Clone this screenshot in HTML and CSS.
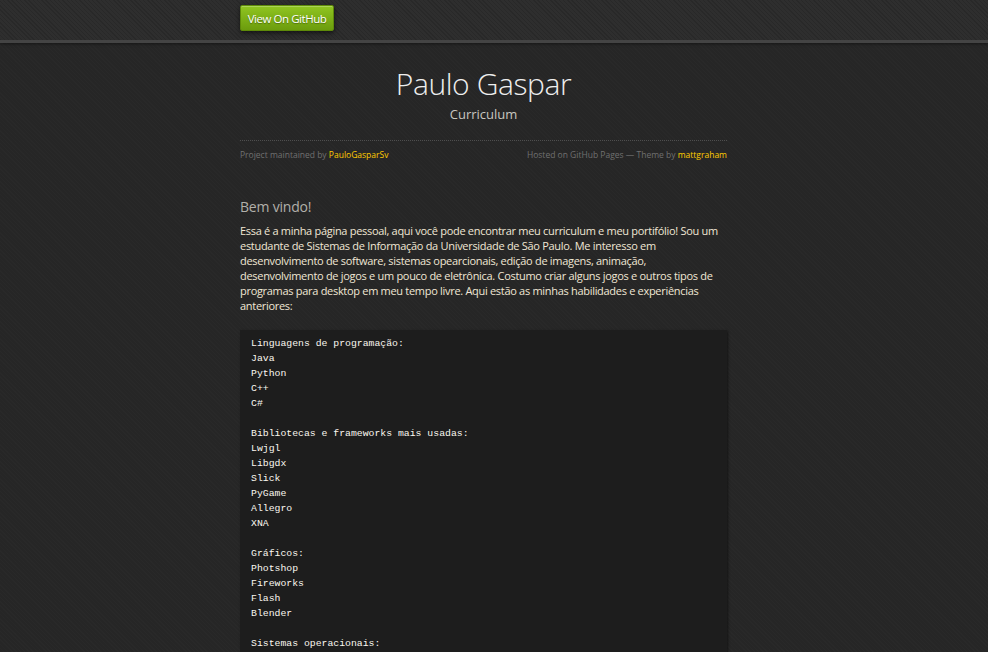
FILE: index.html
```html
<!DOCTYPE html>
<html lang="pt">
<head>
<meta charset="utf-8">
<title>Paulo Gaspar</title>
<link rel="stylesheet" href="styles.css">
</head>
<body>
<header class="topbar">
  <nav class="topnav">
    <a class="gh-button" href="#">View On GitHub</a>
  </nav>
</header>
<main class="container">
  <div class="title-block">
    <h1 class="title">Paulo Gaspar</h1>
    <h2 class="subtitle">Curriculum</h2>
  </div>
  <div class="meta">
    <span>Project maintained by <a href="#">PauloGasparSv</a></span>
    <span>Hosted on GitHub Pages — Theme by <a href="#">mattgraham</a></span>
  </div>
  <section class="content">
    <h3 class="section-title">Bem vindo!</h3>
    <p class="intro">Essa é a minha página pessoal, aqui você pode encontrar meu curriculum e meu portifólio! Sou um estudante de Sistemas de Informação da Universidade de São Paulo. Me interesso em desenvolvimento de software, sistemas opearcionais, edição de imagens, animação, desenvolvimento de jogos e um pouco de eletrônica. Costumo criar alguns jogos e outros tipos de programas para desktop em meu tempo livre. Aqui estão as minhas habilidades e experiências anteriores:</p>
<pre class="code"><code>Linguagens de programação:
Java
Python
C++
C#

Bibliotecas e frameworks mais usadas:
Lwjgl
Libgdx
Slick
PyGame
Allegro
XNA

Gráficos:
Photshop
Fireworks
Flash
Blender

Sistemas operacionais:
Windows
Linux
</code></pre>
  </section>
</main>
</body>
</html>
```
FILE: styles.css
```css
html, body {
  margin: 0;
  padding: 0;
}
body {
  background-color: #262626;
  background-image: repeating-linear-gradient(45deg, rgba(255,255,255,0.012) 0 1px, transparent 1px 3px);
  color: #f0e7d5;
  font-family: "Open Sans", "Liberation Sans", sans-serif;
  font-size: 11px;
  line-height: 15px;
}
a { color: #ffcc00; text-decoration: none; }

.topbar {
  height: 40px;
  background-color: #2e2e2e;
  background-image: repeating-linear-gradient(45deg, rgba(0,0,0,0.12) 0 1px, transparent 1px 3px);
  border-bottom: 3px solid #444;
  box-shadow: 0 1px 3px rgba(0,0,0,0.45);
}
.topnav {
  width: 487px;
  margin-left: calc(50% - 254px);
  padding-top: 5px;
}
.gh-button {
  display: inline-block;
  width: 94px;
  height: 26px;
  box-sizing: border-box;
  line-height: 25px;
  text-align: center;
  font-size: 11.5px;
  letter-spacing: -0.45px;
  color: #fff;
  background: linear-gradient(#90c521, #6b9c0d);
  border: 1px solid #5e8a09;
  border-radius: 2px;
  box-shadow: 0 2px 4px rgba(0,0,0,0.55), inset 0 1px 0 rgba(255,255,255,0.25);
  text-shadow: 0 1px 1px rgba(0,0,0,0.35);
}

.container {
  width: 487px;
  margin-left: calc(50% - 254px);
}
.title-block {
  text-align: center;
  padding-top: 20px;
  padding-bottom: 17px;
  border-bottom: 1px dotted #4e4e4e;
}
.title {
  margin: 0;
  font-weight: 300;
  font-size: 30px;
  letter-spacing: -0.4px;
  line-height: 42px;
  color: #eee;
}
.subtitle {
  margin: 0;
  font-weight: 400;
  font-size: 13px;
  line-height: 18px;
  color: #c8c6c0;
}
.meta {
  display: flex;
  justify-content: space-between;
  font-size: 8.5px;
  line-height: 12px;
  color: #707070;
  padding-top: 8px;
}
.content {
  padding-top: 36px;
}
.section-title {
  margin: 0 0 6px;
  font-weight: 400;
  font-size: 14px;
  letter-spacing: -0.2px;
  line-height: 20px;
  color: #b2b0aa;
}
.intro {
  margin: 0 0 17px;
  letter-spacing: -0.3px;
}
.code {
  margin: 0;
  background: #1d1d1d;
  box-shadow: 1px 1px 2px rgba(0,0,0,0.5);
  padding: 6px 11px;
  font-family: "Liberation Mono", "DejaVu Sans Mono", monospace;
  font-size: 9.8px;
  line-height: 15px;
  color: #fbf8f0;
}
.code code {
  font-family: inherit;
  font-size: inherit;
}
```
